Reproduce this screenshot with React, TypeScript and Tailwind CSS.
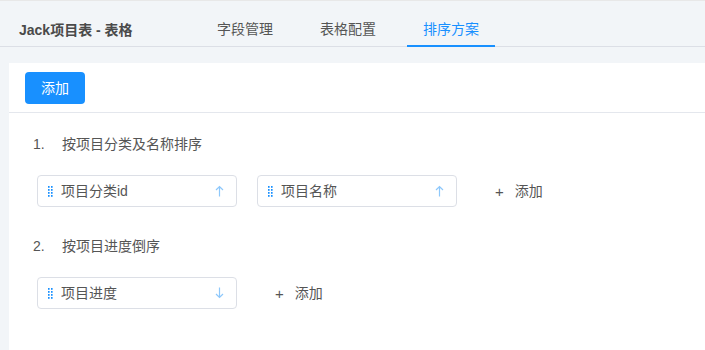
import React from 'react';

type Field = { name: string; dir: 'asc' | 'desc' };

type Scheme = { title: string; fields: Field[] };

const schemes: Scheme[] = [
  {
    title: '按项目分类及名称排序',
    fields: [
      { name: '项目分类id', dir: 'asc' },
      { name: '项目名称', dir: 'asc' },
    ],
  },
  {
    title: '按项目进度倒序',
    fields: [{ name: '项目进度', dir: 'desc' }],
  },
];

const tabs = ['字段管理', '表格配置', '排序方案'];

function DragHandle() {
  return (
    <svg width="5" height="11" viewBox="0 0 5 11" className="shrink-0">
      {[0, 3, 6, 9].map((y) => (
        <g key={y}>
          <rect x="0" y={y} width="1.6" height="1.8" fill="#1890ff" />
          <rect x="3" y={y} width="1.6" height="1.8" fill="#1890ff" />
        </g>
      ))}
    </svg>
  );
}

function Arrow({ dir }: { dir: 'asc' | 'desc' }) {
  return (
    <svg
      width="9"
      height="12"
      viewBox="0 0 9 12"
      className={dir === 'desc' ? 'rotate-180' : ''}
    >
      <path d="M4.5 1.5V11.5M1 5L4.5 1.5L8 5" stroke="#8ec8fb" strokeWidth="1.2" fill="none" />
    </svg>
  );
}

function FieldBox({ field }: { field: Field }) {
  return (
    <div className="flex h-[32px] w-[200px] items-center rounded border border-[#dcdfe6] bg-white pl-[10px] pr-[12px]">
      <DragHandle />
      <span className="ml-[8px] flex-1 text-[14px] text-[#555]">{field.name}</span>
      <Arrow dir={field.dir} />
    </div>
  );
}

export default function App() {
  return (
    <div
      className="h-[350px] w-[705px] overflow-hidden border-t border-[#e8e8e8] bg-[#f2f5f8]"
      style={{ fontFamily: '"Liberation Sans", "Noto Sans CJK SC", sans-serif' }}
    >
      <div className="flex h-[46px] items-end border-b border-[#dcdfe6]">
        <div className="mb-[5px] ml-[19px] w-[182px] text-[14px] font-bold text-[#4a4a4a]">
          Jack项目表 - 表格
        </div>
        <div className="flex gap-[15px]">
          {tabs.map((t, i) => (
            <div
              key={t}
              className={
                i === 2
                  ? 'mb-[-1px] flex h-[38px] w-[88px] items-start justify-center border-b-2 border-[#1890ff] pt-[10px] text-[14px] text-[#1890ff]'
                  : 'mb-[-1px] flex h-[38px] w-[88px] items-start justify-center border-b-2 border-transparent pt-[10px] text-[14px] text-[#555]'
              }
            >
              {t}
            </div>
          ))}
        </div>
      </div>

      <div className="ml-[9px] mt-[16px] h-[300px] bg-white">
        <div className="border-b border-[#e4e7ed] pb-[8px] pl-[16px] pt-[9px]">
          <button className="h-[32px] w-[60px] rounded bg-[#1890ff] text-[14px] text-white">
            添加
          </button>
        </div>

        <div className="pl-[24px] pt-[21px]">
          {schemes.map((s, i) => (
            <div key={s.title} className={i === 0 ? '' : 'mt-[29px]'}>
              <div className="flex h-[20px] items-center text-[14px] text-[#555]">
                <span className="w-[29px]">{i + 1}.</span>
                <span>{s.title}</span>
              </div>
              <div className="ml-[4px] mt-[21px] flex items-center gap-[20px]">
                {s.fields.map((f) => (
                  <FieldBox key={f.name} field={f} />
                ))}
                <div className="ml-[18px] flex items-center text-[14px] text-[#555]">
                  <span className="mr-[11px] text-[15px] leading-none">+</span>
                  <span>添加</span>
                </div>
              </div>
            </div>
          ))}
        </div>
      </div>
    </div>
  );
}
